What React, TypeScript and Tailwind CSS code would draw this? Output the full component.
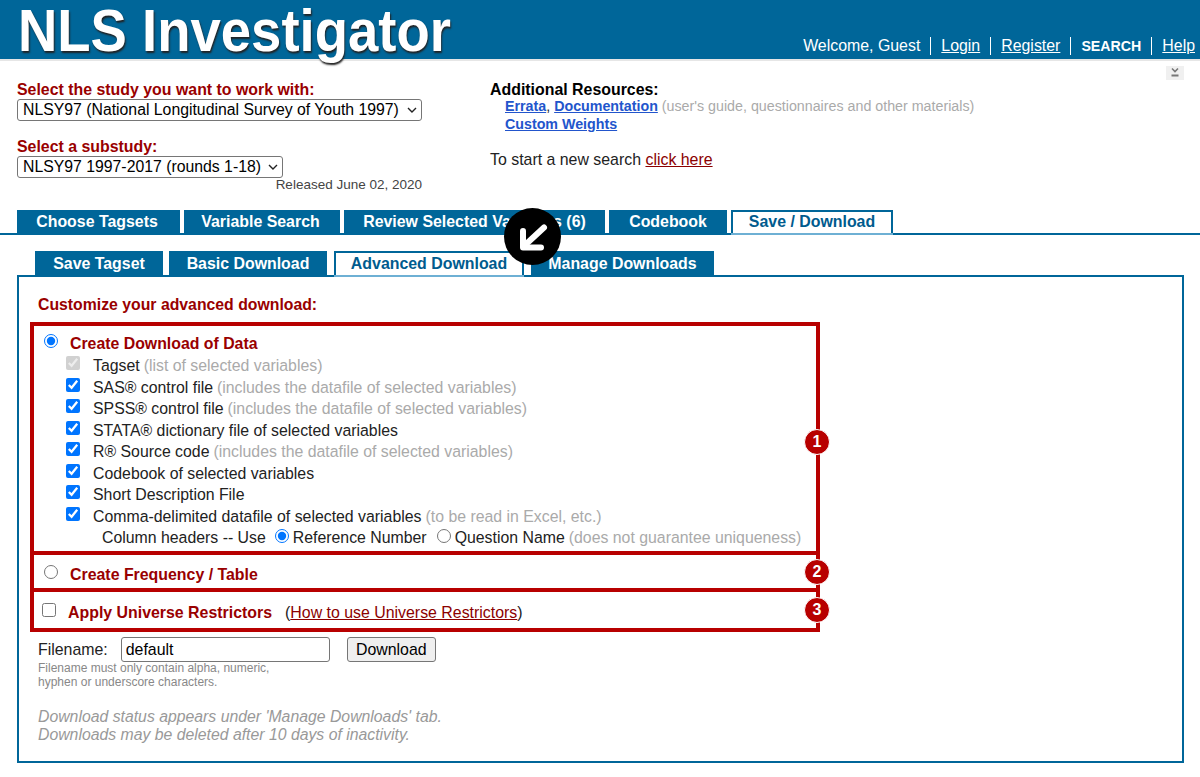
const mainTabs = [
  { label: 'Choose Tagsets', width: 'w-[163px] pr-[3px]' },
  { label: 'Variable Search', width: 'w-[156px] pr-[3px]' },
  { label: 'Review Selected Variables (6)', width: 'w-[261px]' },
  { label: 'Codebook', width: 'w-[118px]' },
  { label: 'Save / Download', width: 'w-[162px] pb-[2px]', active: true },
];

const subTabs = [
  { label: 'Save Tagset', width: 'w-[128px] pt-[2px]' },
  { label: 'Basic Download', width: 'w-[158px] pt-[2px]' },
  { label: 'Advanced Download', width: 'w-[190px] ml-[1px]', active: true },
  { label: 'Manage Downloads', width: 'w-[183px] ml-[1px] pt-[2px]' },
];

const options = [
  { label: 'Tagset', note: '(list of selected variables)', disabled: true },
  { label: 'SAS® control file', note: '(includes the datafile of selected variables)' },
  { label: 'SPSS® control file', note: '(includes the datafile of selected variables)' },
  { label: 'STATA® dictionary file of selected variables' },
  { label: 'R® Source code', note: '(includes the datafile of selected variables)' },
  { label: 'Codebook of selected variables' },
  { label: 'Short Description File' },
  { label: 'Comma-delimited datafile of selected variables', note: '(to be read in Excel, etc.)' },
];

function Tab({ label, width, active }: { label: string; width: string; active?: boolean }) {
  return (
    <div
      className={`${width} relative z-10 flex items-center justify-center font-bold text-[15.9px] ${
        active
          ? 'bg-white text-[#005b8e] border-2 border-b-0 border-[#006699] shadow-[0_2px_0_#6eb0d4]'
          : 'bg-[#006699] text-white'
      }`}
    >
      {label}
    </div>
  );
}

function NumberBadge({ n, top }: { n: number; top: string }) {
  return (
    <div
      className={`absolute ${top} z-10 -right-[14px] w-[26px] h-[26px] rounded-full bg-[#b80000] border border-white text-white text-[16px] font-black flex items-center justify-center`}
    >
      {n}
    </div>
  );
}

function StudySelect({ width, value }: { width: string; value: string }) {
  return (
    <div className={`relative ${width} h-[22px]`}>
      <select className="block w-full h-full appearance-none border border-[#767676] rounded-[3px] bg-white pl-[5px] text-[15.8px] leading-[20px] text-black">
        <option>{value}</option>
      </select>
      <svg
        className="absolute right-[5px] top-[8px]"
        width="10"
        height="6"
        viewBox="0 0 10 6"
        fill="none"
        stroke="#222"
        strokeWidth="1.4"
      >
        <path d="M1 1l4 4 4-4" />
      </svg>
    </div>
  );
}

export default function App() {
  return (
    <div className="relative h-[777px] overflow-hidden bg-white text-[15.9px] text-[#222] font-['Liberation_Sans',Arial,sans-serif]">
      {/* header */}
      <div className="h-[59px] bg-[#006699] flex items-start justify-between pl-[18px] pr-[5px] shadow-[0_2px_0_#e6e6e6]">
        <div className="h-[66px] shrink-0 origin-left scale-x-[0.908] text-[60px] leading-[62px] font-bold text-white whitespace-nowrap [text-shadow:1px_2px_2px_#222]">
          NLS Investigator
        </div>
        <div className="flex items-center gap-[10px] text-white mt-[37px] leading-[18px]">
          <span>Welcome, Guest</span>
          <i className="w-px h-[18px] bg-white" />
          <span className="underline">Login</span>
          <i className="w-px h-[18px] bg-white" />
          <span className="underline">Register</span>
          <i className="w-px h-[18px] bg-white" />
          <span className="font-bold text-[14.2px]">SEARCH</span>
          <i className="w-px h-[18px] bg-white" />
          <span className="underline">Help</span>
        </div>
      </div>

      {/* collapse icon */}
      <div className="absolute top-[66px] right-[16px] w-[18px] h-[14px] bg-[#f0f0f0] flex items-center justify-center">
        <svg width="12" height="12" viewBox="0 0 12 12" fill="none" stroke="#777" strokeWidth="1.6">
          <path d="M3 1.5l3 3 3-3" />
          <path d="M2.5 8.5h7" strokeWidth="2" />
        </svg>
      </div>

      {/* study selection */}
      <div className="flex pt-[21px] pl-[17px] h-[151px]">
        <div className="w-[473px]">
          <div className="font-bold text-[#900] leading-[19px]">Select the study you want to work with:</div>
          <StudySelect width="w-[405px]" value="NLSY97 (National Longitudinal Survey of Youth 1997)" />
          <div className="font-bold text-[#900] leading-[19px] mt-[16px]">Select a substudy:</div>
          <StudySelect width="w-[266px]" value="NLSY97 1997-2017 (rounds 1-18)" />
          <div className="w-[405px] text-right text-[13.5px] leading-[13px] text-[#444]">Released June 02, 2020</div>
        </div>
        <div>
          <div className="font-bold text-black leading-[19px]">Additional Resources:</div>
          <div className="pl-[15px] -mt-[2px] leading-[18px] text-[14.25px]">
            <a className="font-bold text-[#2255cc] underline">Errata</a>,{' '}
            <a className="font-bold text-[#2255cc] underline">Documentation</a>{' '}
            <span className="text-[#aaa]">(user's guide, questionnaires and other materials)</span>
          </div>
          <div className="pl-[15px] leading-[18px] text-[14.25px]">
            <a className="font-bold text-[#2255cc] underline">Custom Weights</a>
          </div>
          <div className="mt-[17px] leading-[19px]">
            To start a new search <a className="text-[#8b0000] underline">click here</a>
          </div>
        </div>
      </div>

      {/* main tabs */}
      <div className="flex gap-[4px] pl-[17px] h-[23px] border-b-2 border-[#006699] box-content">
        {mainTabs.map((t) => (
          <Tab key={t.label} {...t} />
        ))}
      </div>

      {/* sub tabs */}
      <div className="flex gap-[6px] pl-[35px] h-[24px] mt-[16px]">
        {subTabs.map((t) => (
          <Tab key={t.label} {...t} />
        ))}
      </div>

      {/* panel */}
      <div className="ml-[17px] w-[1167px] h-[488px] border-2 border-[#006699] pt-[18px] pl-[11px]">
        <div className="font-bold text-[#900] leading-[19px] pl-[8px] text-[15.8px]">Customize your advanced download:</div>
        <div className="relative w-[790px] mt-[8px] border-4 border-[#b80000]">
          <div className="h-[229px] pl-[10px] pt-[7px] border-b-4 border-[#b80000] text-[15.85px]">
            <div className="flex items-center font-bold text-[#900] leading-[22px]">
              <input type="radio" defaultChecked className="w-[14px] h-[14px] m-0 mr-[12px] -mt-[6px]" />
              Create Download of Data
            </div>
            <div className="leading-[21.5px]">
              {options.map((o) => (
                <div key={o.label} className="flex items-center pl-[22px] h-[21.5px] whitespace-nowrap">
                  <input
                    type="checkbox"
                    defaultChecked
                    disabled={o.disabled}
                    className="w-[14px] h-[14px] m-0 mr-[13px] -mt-[5px]"
                  />
                  <span>{o.label}</span>
                  {o.note && <span className="text-[#aaa] ml-[4px]">{o.note}</span>}
                </div>
              ))}
              <div className="flex items-center pl-[58px] h-[21.5px] whitespace-nowrap">
                Column headers -- Use
                <input type="radio" name="hdr" defaultChecked className="w-[14px] h-[14px] m-0 ml-[9px] mr-[4px] -mt-[3px]" />
                Reference Number
                <input type="radio" name="hdr" className="w-[14px] h-[14px] m-0 ml-[10px] mr-[4px] -mt-[3px]" />
                Question Name
                <span className="text-[#aaa] ml-[4px]">(does not guarantee uniqueness)</span>
              </div>
            </div>
          </div>
          <div className="h-[37px] pl-[10px] pt-[6px] flex items-center font-bold text-[#900] border-b-4 border-[#b80000]">
            <input type="radio" className="w-[14px] h-[14px] m-0 mr-[12px] -mt-[6px]" />
            Create Frequency / Table
          </div>
          <div className="h-[36px] pl-[8px] pt-[5px] flex items-center">
            <input type="checkbox" className="w-[14px] h-[14px] m-0 mr-[12px] -mt-[5px]" />
            <span className="font-bold text-[#900]">Apply Universe Restrictors</span>
            <span className="ml-[13px]">
              (<a className="text-[#8b0000] underline">How to use Universe Restrictors</a>)
            </span>
          </div>
          <NumberBadge n={1} top="top-[103px]" />
          <NumberBadge n={2} top="top-[233px]" />
          <NumberBadge n={3} top="top-[271px]" />
        </div>

        <div className="flex items-center mt-[5px] pl-[8px]">
          <span>Filename:</span>
          <input
            defaultValue="default"
            className="w-[209px] h-[25px] ml-[13px] px-[4px] border border-[#767676] rounded-[3px] text-black"
          />
          <button className="ml-[17px] w-[89px] h-[25px] border border-[#767676] rounded-[3px] bg-[#efefef] text-black">
            Download
          </button>
        </div>
        <div className="pl-[8px] text-[12px] leading-[13.5px] text-[#888]">
          Filename must only contain alpha, numeric,
          <br />
          hyphen or underscore characters.
        </div>
        <div className="pl-[8px] mt-[19px] italic text-[15.8px] leading-[18px] text-[#999]">
          Download status appears under 'Manage Downloads' tab.
          <br />
          Downloads may be deleted after 10 days of inactivity.
        </div>
      </div>

      {/* arrow callout */}
      <div className="absolute z-20 left-[504px] top-[208px] w-[57px] h-[57px] rounded-full bg-black flex items-center justify-center">
        <svg width="34" height="34" viewBox="0 0 34 34" fill="none" stroke="#fff" strokeWidth="6" strokeLinecap="round" strokeLinejoin="round">
          <path d="M28 7.5L8 26" />
          <path d="M7 11v16.5h18" />
        </svg>
      </div>
    </div>
  );
}
